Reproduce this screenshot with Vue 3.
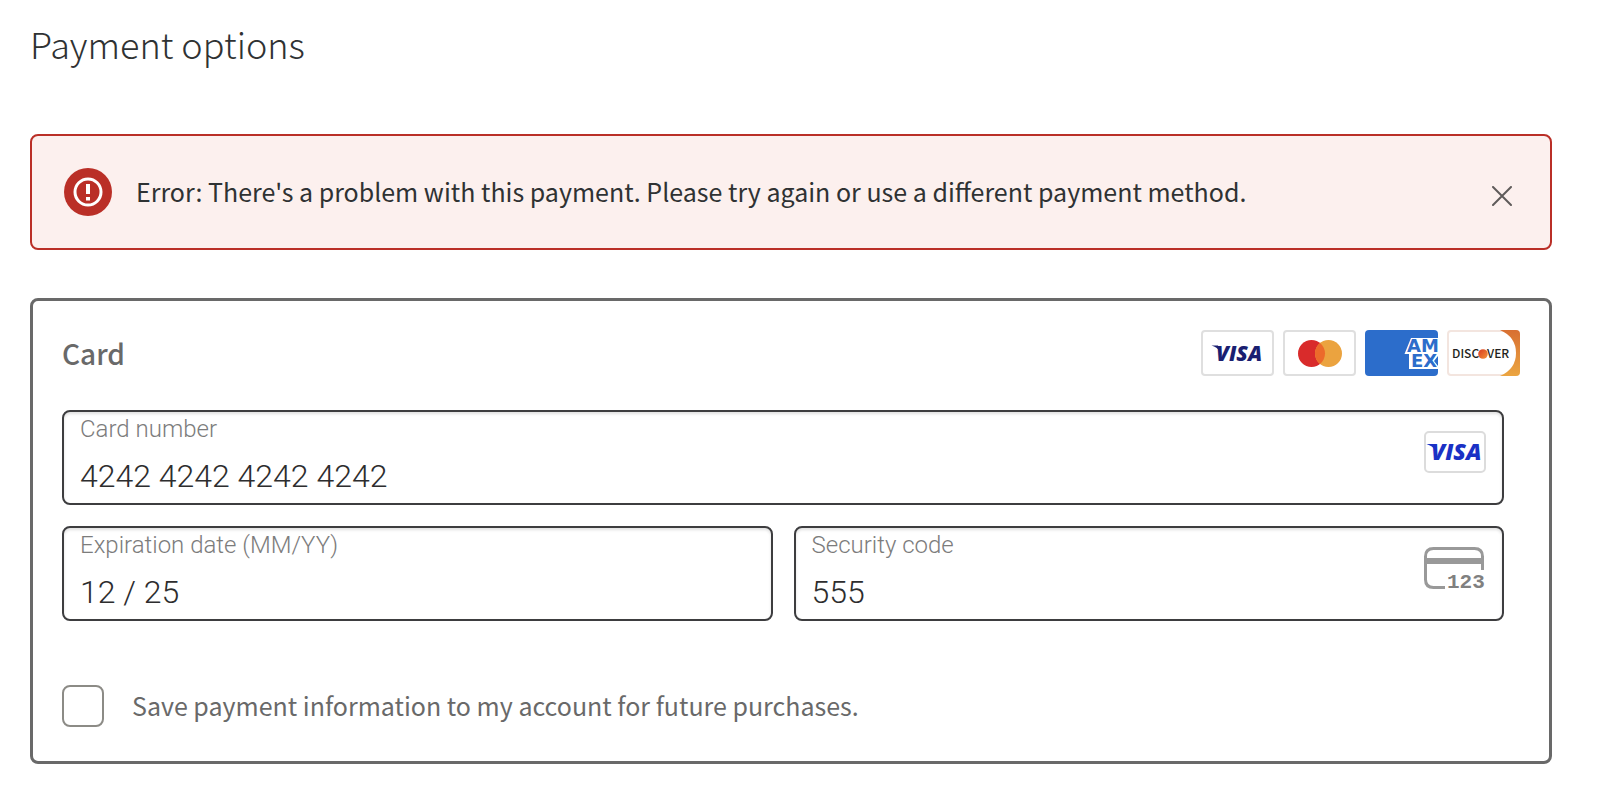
<script setup>
import { ref } from 'vue'

const showError = ref(true)
const cardNumber = ref('4242 4242 4242 4242')
const expiration = ref('12 / 25')
const securityCode = ref('555')
const saveCard = ref(false)
</script>

<template>
  <main class="page">
    <h1 class="title">Payment options</h1>

    <div v-if="showError" class="alert" role="alert">
      <svg class="alert-icon" viewBox="0 0 48 48" aria-hidden="true">
        <circle cx="24" cy="24" r="24" fill="#ba2f27" />
        <circle cx="24" cy="24" r="13" fill="none" stroke="#fff" stroke-width="3" />
        <path d="M22 16h4v10h-4zM22 29h4v3.500h-4z" fill="#fff" />
      </svg>
      <p class="alert-text">Error: There's a problem with this payment. Please try again or use a different payment method.</p>
      <button class="close" type="button" aria-label="Dismiss" @click="showError = false">
        <svg viewBox="0 0 20 20" aria-hidden="true">
          <path d="M1 1l18 18M19 1L1 19" stroke="#5f5b5a" stroke-width="2" stroke-linecap="round" />
        </svg>
      </button>
    </div>

    <form class="card" @submit.prevent>
      <header class="card-head">
        <h2 class="card-title">Card</h2>
        <div class="brands">
          <svg class="brand" viewBox="0 0 73 46" role="img" aria-label="Visa">
            <rect x="1" y="1" width="71" height="44" rx="3" fill="#fff" stroke="#dfdfdf" stroke-width="2" />
            <text x="15" y="31" class="visa" font-size="21" fill="#1a1f71">VISA</text>
            <path d="M10.500 15.500h6.500l2 6q-3-4.500-8.500-6z" fill="#1a1f71" />
          </svg>
          <svg class="brand" viewBox="0 0 73 46" role="img" aria-label="Mastercard">
            <rect x="1" y="1" width="71" height="44" rx="3" fill="#fff" stroke="#dfdfdf" stroke-width="2" />
            <circle cx="28.500" cy="23.500" r="13.500" fill="#d92b2b" />
            <circle cx="45.500" cy="23.500" r="13.500" fill="#eba33f" />
            <path d="M37 13a13.500 13.500 0 0 1 0 21a13.500 13.500 0 0 1 0-21z" fill="#ec6a2b" />
          </svg>
          <svg class="brand" viewBox="0 0 73 46" role="img" aria-label="American Express">
            <defs>
              <clipPath id="amex-clip"><rect width="73" height="46" rx="4" /></clipPath>
            </defs>
            <g clip-path="url(#amex-clip)">
              <rect width="73" height="46" fill="#2c6dcb" />
              <path d="M46 8h27v18l-4 5 4 5v3H44V24h-4.500z" fill="#fff" />
              <g class="amex" font-size="18" fill="#2c6dcb">
                <text x="42" y="22">AM</text>
                <text x="46" y="37">EX</text>
              </g>
              <path d="M73 27v8l-3-4z" fill="#2c6dcb" />
            </g>
          </svg>
          <svg class="brand" viewBox="0 0 73 46" role="img" aria-label="Discover">
            <defs>
              <linearGradient id="disc-edge" x1="0" y1="0" x2="0" y2="1">
                <stop offset="0" stop-color="#d86f32" />
                <stop offset="1" stop-color="#eba541" />
              </linearGradient>
              <linearGradient id="disc-dot" x1="0" y1="0" x2="1" y2="1">
                <stop offset="0" stop-color="#d83a20" />
                <stop offset="1" stop-color="#f49438" />
              </linearGradient>
            </defs>
            <rect x="1" y="1" width="71" height="44" rx="3" fill="#fff" stroke="#f3e5df" stroke-width="2" />
            <path d="M53 0h16q4 0 4 4v38q0 4-4 4H53q16-7 16-23T53 0z" fill="url(#disc-edge)" />
            <g class="discover" font-size="12" fill="#231f20">
              <text x="5" y="28">DISC</text>
              <text x="40" y="28">VER</text>
            </g>
            <circle cx="36" cy="24" r="4.800" fill="url(#disc-dot)" />
          </svg>
        </div>
      </header>

      <div class="fields">
        <div class="field wide">
          <div class="field-body">
            <label for="number">Card number</label>
            <input id="number" v-model="cardNumber" type="text" inputmode="numeric" />
          </div>
          <svg class="field-icon" viewBox="0 0 62 42" role="img" aria-label="Visa">
            <rect x="1" y="1" width="60" height="40" rx="4" fill="#fff" stroke="#dcdcdc" stroke-width="2" />
            <text x="7" y="29" class="visa" font-size="23" fill="#1a31c5">VISA</text>
            <path d="M2.500 13h7l2 6q-3-4-9-6z" fill="#1a31c5" />
          </svg>
        </div>
        <div class="field">
          <div class="field-body">
            <label for="expiry">Expiration date (MM/YY)</label>
            <input id="expiry" v-model="expiration" type="text" inputmode="numeric" />
          </div>
        </div>
        <div class="field">
          <div class="field-body">
            <label for="cvc">Security code</label>
            <input id="cvc" v-model="securityCode" type="text" inputmode="numeric" />
          </div>
          <svg class="field-icon" viewBox="0 0 62 42" aria-hidden="true">
            <path d="M21 40.500H9.500q-8 0-8-8v-23q0-8 8-8h41q8 0 8 8V23" fill="none" stroke="#999" stroke-width="3" />
            <path d="M1 11h58v6H1z" fill="#999" />
            <text x="23" y="41" class="digits" font-size="21" fill="#808080">123</text>
          </svg>
        </div>
      </div>

      <label class="save">
        <input v-model="saveCard" type="checkbox" />
        <span>Save payment information to my account for future purchases.</span>
      </label>
    </form>
  </main>
</template>

<style>
body {
  background: #fff;
}
</style>

<style scoped>
.page {
  box-sizing: border-box;
  padding: 17px 50px 46px 30px;
  font-family: "Noto Sans CJK SC", "Open Sans", sans-serif;
  color: #2f3233;
}

.title {
  margin: 0 0 65px;
  font-size: 36px;
  line-height: 52px;
  font-weight: 300;
}

.alert {
  display: flex;
  align-items: center;
  gap: 24px;
  padding: 32px;
  margin-bottom: 48px;
  border: 2px solid #ba2f27;
  border-radius: 8px;
  background: #fcf0ee;
}

.alert-icon {
  flex: none;
  width: 48px;
  height: 48px;
}

.alert-text {
  flex: 1;
  margin: 0;
  padding-bottom: 2px;
  font-size: 25px;
  line-height: 40px;
}

.close {
  display: flex;
  flex: none;
  padding: 6px;
  margin-top: 8px;
  border: 0;
  background: none;
  cursor: pointer;
}

.close svg {
  width: 20px;
  height: 20px;
}

.card {
  padding: 29px 29px 34px;
  border: 3px solid #696969;
  border-radius: 8px;
}

.card-head {
  display: flex;
  align-items: center;
  justify-content: space-between;
  margin-bottom: 34px;
}

.card-title {
  margin: 0;
  font-size: 28px;
  line-height: 46px;
  font-weight: 500;
  color: #696969;
}

.brands {
  display: flex;
  gap: 9px;
}

.brand {
  width: 73px;
  height: 46px;
}

.visa {
  font-family: "Open Sans", sans-serif;
  font-weight: 800;
  font-style: italic;
}

.amex {
  font-family: "DejaVu Sans", sans-serif;
  font-weight: 700;
}

.discover {
  font-family: "Noto Sans CJK SC", sans-serif;
  font-weight: 500;
}

.digits {
  font-family: "Liberation Mono", monospace;
  font-weight: 700;
}

.fields {
  display: grid;
  grid-template-columns: 1fr 1fr;
  gap: 21px;
  margin: 0 16px 64px 0;
}

.field {
  display: flex;
  align-items: flex-start;
  box-sizing: border-box;
  min-width: 0;
  height: 95px;
  padding: 0 16px;
  border: 2px solid #3d3d3f;
  border-radius: 8px;
  box-shadow: inset 0 2px 3px #0000001f;
  font-family: Roboto, "Liberation Sans", sans-serif;
  font-weight: 300;
}

.wide {
  grid-column: 1 / -1;
}

.field-body {
  display: flex;
  flex: 1;
  flex-direction: column;
  min-width: 0;
}

.field-body label {
  font-size: 24px;
  line-height: 34px;
  color: #7c7c7c;
}

.field-body input {
  width: 100%;
  height: 56px;
  padding: 4px 0 0;
  box-sizing: border-box;
  border: 0;
  outline: 0;
  background: none;
  font: inherit;
  font-size: 32px;
  color: #2d2d2e;
}

.field-icon {
  flex: none;
  width: 62px;
  height: 42px;
  margin-top: 19px;
  overflow: visible;
}

.save {
  display: flex;
  align-items: center;
  gap: 28px;
  font-size: 25px;
  line-height: 40px;
  color: #696969;
}

.save span {
  padding-bottom: 2px;
}

.save input {
  flex: none;
  width: 42px;
  height: 42px;
  margin: 0;
  appearance: none;
  border: 2px solid #8c8b86;
  border-radius: 8px;
  background: #fff;
}

.save input:checked {
  background: #8c8b86;
}
</style>
